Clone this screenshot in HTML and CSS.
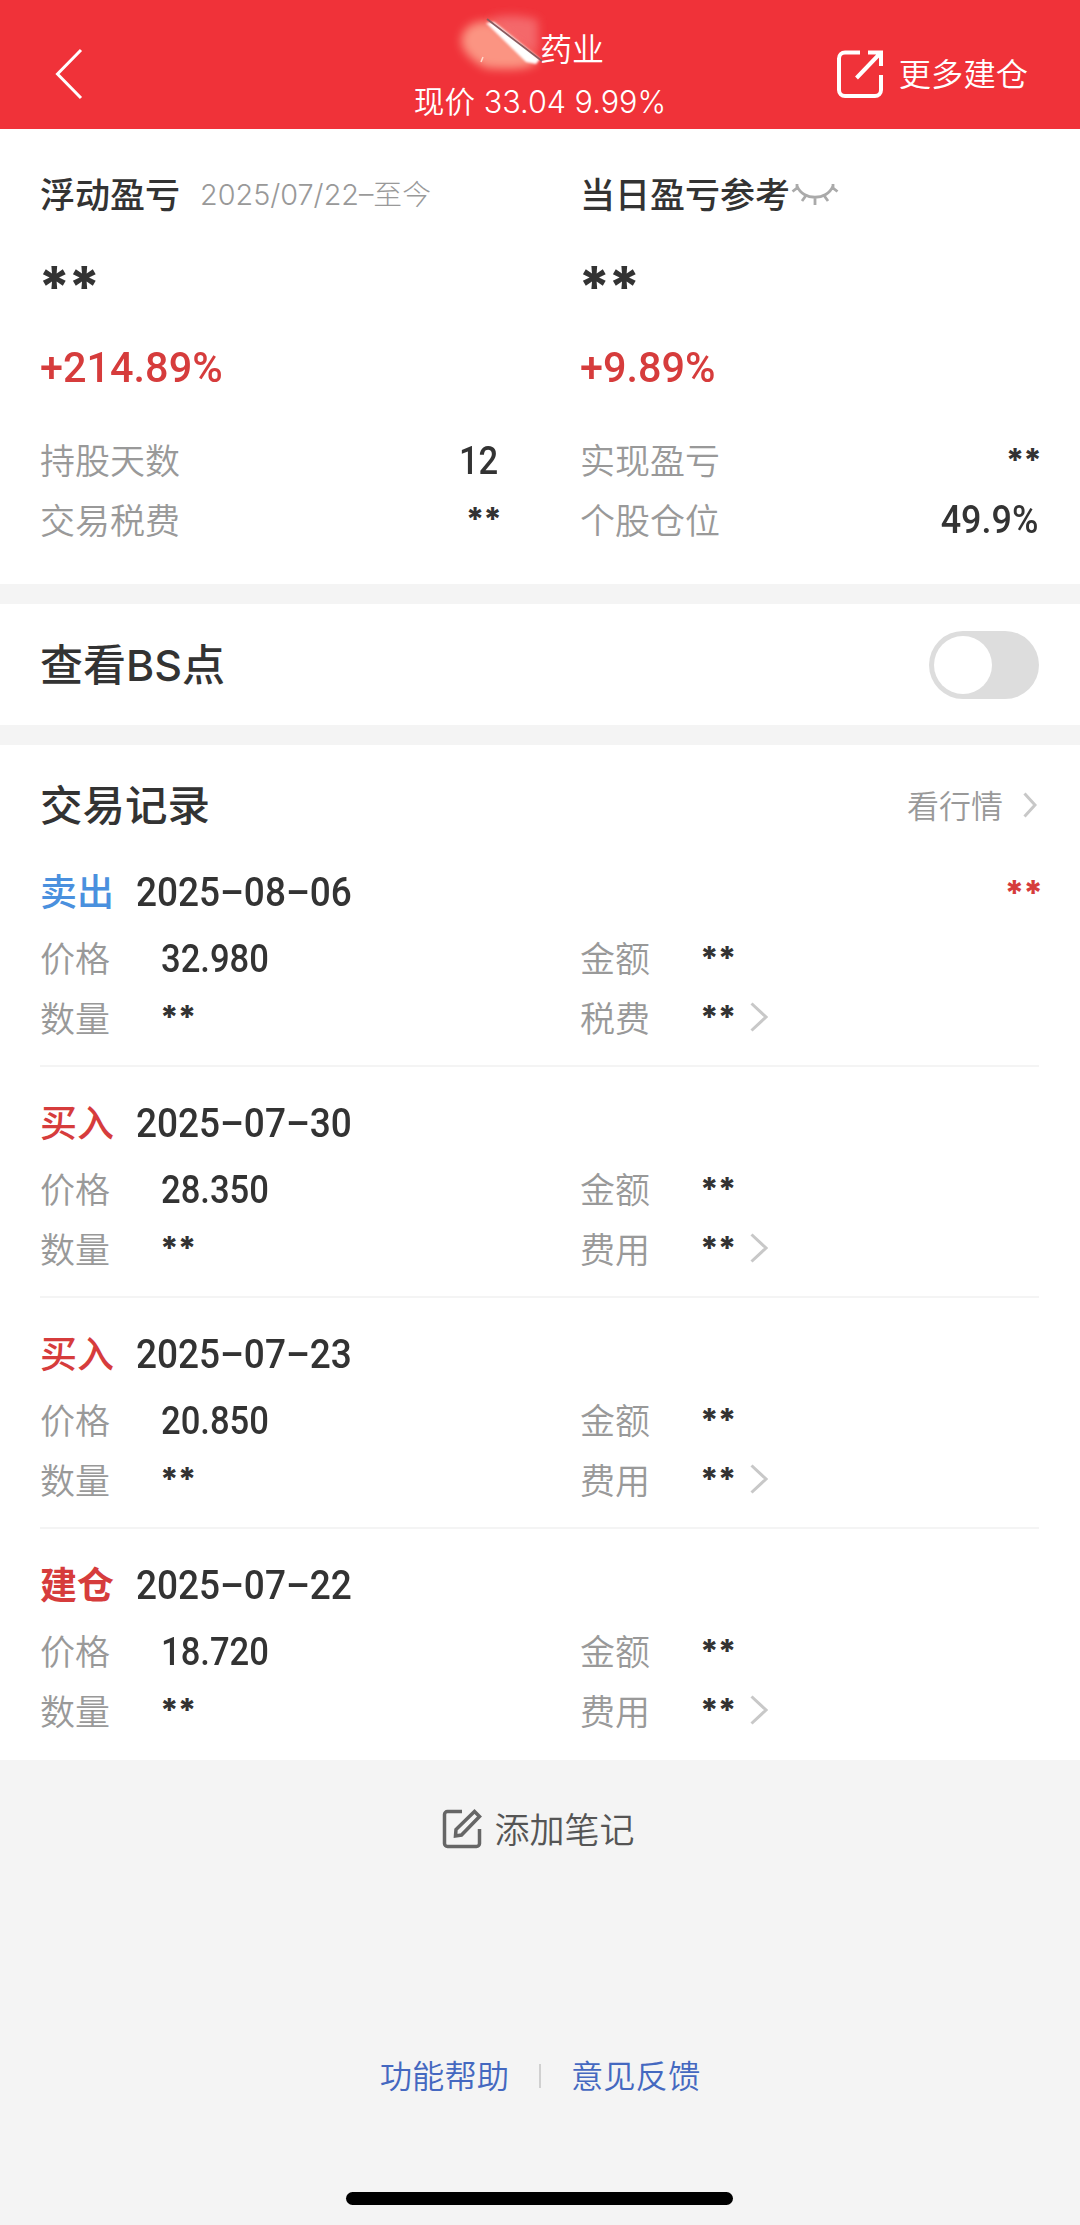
FILE: index.html
```
<!DOCTYPE html>
<html lang="zh-CN">
<head>
<meta charset="utf-8">
<title>药业</title>
<link rel="stylesheet" href="styles.css">
</head>
<body>
<header class="topbar">
  <svg class="back" viewBox="0 0 28 52" width="28" height="52"><path d="M26 2 2.5 26 26 50"/></svg>
  <div class="stock">
    <div class="stock-name">
      <svg class="smudge" viewBox="0 0 100 80" width="100" height="80">
        <defs>
          <filter id="soft" x="-30%" y="-30%" width="160%" height="160%"><feGaussianBlur stdDeviation="5"/></filter>
          <filter id="thin" x="-20%" y="-20%" width="140%" height="140%"><feGaussianBlur stdDeviation="1.2"/></filter>
        </defs>
        <path d="M40 18C60 14 76 16 88 20V54L60 40Z" fill="#f4676b" filter="url(#soft)"/>
        <path d="M12 36C16 24 28 20 42 22L88 60C84 70 60 70 36 68 24 62 8 50 12 36Z" fill="#fb9482" filter="url(#soft)"/>
        <path d="M36 23 44 22 90 59 86 64 76 62Z" fill="#fff" filter="url(#thin)"/>
        <path d="M37 19 92 61" stroke="#8a5a5e" stroke-width="1.8"/>
        <path d="M33 57 31 62" stroke="#ffd9cc" stroke-width="1.5"/>
      </svg>
      <span>药业</span>
    </div>
    <div class="stock-price">现价 33.04 9.99%</div>
  </div>
  <a class="more">
    <svg viewBox="0 0 46 48" width="46" height="48"><path d="M23 2.5H8a6 6 0 0 0-6 6V40a6 6 0 0 0 6 6H38a6 6 0 0 0 6-6V25M31 2.500H44V16M43 3.500 19.500 28"/></svg>
    <span>更多建仓</span>
  </a>
</header>

<section class="summary">
  <div class="col">
    <div class="col-head"><h2>浮动盈亏</h2><span class="range">2025/07/22–至今</span></div>
    <div class="mask big">**</div>
    <div class="pct">+214.89%</div>
    <div class="kv"><span class="label">持股天数</span><span class="num">12</span></div>
    <div class="kv"><span class="label">交易税费</span><span class="mask">**</span></div>
  </div>
  <div class="col">
    <div class="col-head"><h2>当日盈亏参考</h2>
      <svg class="eye" viewBox="0 0 48 24" width="48" height="24"><path d="M6 4C12 19 36 19 42 4M6 2V6L1.500 9.500M42 2V6L46.500 9.500M15 13.500 11 19M24 15.500V23M33 13.500 37 19"/></svg>
    </div>
    <div class="mask big">**</div>
    <div class="pct">+9.89%</div>
    <div class="kv"><span class="label">实现盈亏</span><span class="mask">**</span></div>
    <div class="kv"><span class="label">个股仓位</span><span class="num wide">49.9%</span></div>
  </div>
</section>

<section class="bs">
  <h3>查看BS点</h3>
  <span class="toggle"><span class="knob"></span></span>
</section>

<section class="records">
  <div class="records-head">
    <h3>交易记录</h3>
    <a class="quote"><span>看行情</span><svg viewBox="0 0 14 26" width="14" height="26"><path d="M1.500 1.500 12 13 1.500 24.500"/></svg></a>
  </div>

  <article class="record">
    <div class="record-head"><span class="side sell">卖出</span><span class="date">2025–08–06</span><span class="mask profit">**</span></div>
    <div class="grid">
      <span class="label">价格</span><span class="num">32.980</span><span class="label">金额</span><span class="mask">**</span>
      <span class="label">数量</span><span class="mask">**</span><span class="label">税费</span><span class="fee"><span class="mask">**</span><svg viewBox="0 0 18 30" width="18" height="30"><path d="M1.500 1.500 16 15 1.500 28.500"/></svg></span>
    </div>
  </article>

  <article class="record">
    <div class="record-head"><span class="side buy">买入</span><span class="date">2025–07–30</span></div>
    <div class="grid">
      <span class="label">价格</span><span class="num">28.350</span><span class="label">金额</span><span class="mask">**</span>
      <span class="label">数量</span><span class="mask">**</span><span class="label">费用</span><span class="fee"><span class="mask">**</span><svg viewBox="0 0 18 30" width="18" height="30"><path d="M1.500 1.500 16 15 1.500 28.500"/></svg></span>
    </div>
  </article>

  <article class="record">
    <div class="record-head"><span class="side buy">买入</span><span class="date">2025–07–23</span></div>
    <div class="grid">
      <span class="label">价格</span><span class="num">20.850</span><span class="label">金额</span><span class="mask">**</span>
      <span class="label">数量</span><span class="mask">**</span><span class="label">费用</span><span class="fee"><span class="mask">**</span><svg viewBox="0 0 18 30" width="18" height="30"><path d="M1.500 1.500 16 15 1.500 28.500"/></svg></span>
    </div>
  </article>

  <article class="record">
    <div class="record-head"><span class="side open">建仓</span><span class="date">2025–07–22</span></div>
    <div class="grid">
      <span class="label">价格</span><span class="num">18.720</span><span class="label">金额</span><span class="mask">**</span>
      <span class="label">数量</span><span class="mask">**</span><span class="label">费用</span><span class="fee"><span class="mask">**</span><svg viewBox="0 0 18 30" width="18" height="30"><path d="M1.500 1.500 16 15 1.500 28.500"/></svg></span>
    </div>
  </article>
</section>

<div class="note">
  <svg viewBox="0 0 40 40" width="40" height="40"><path d="M20 2.500H5.500a3 3 0 0 0-3 3V34.500a3 3 0 0 0 3 3H34.500a3 3 0 0 0 3-3V20M13.500 27 14 20.500 32.500 2.500 37.500 7.500 19.500 26Z"/></svg>
  <span>添加笔记</span>
</div>

<footer class="links"><a>功能帮助</a><i></i><a>意见反馈</a></footer>
<div class="home"></div>
</body>
</html>
```

FILE: styles.css
```
* { box-sizing: border-box; }
body {
  margin: 0;
  width: 1080px;
  height: 2225px;
  overflow: hidden;
  display: flex;
  flex-direction: column;
  background: #f4f4f4;
  color: #333;
  font-family: Inter, "Noto Sans CJK SC", sans-serif;
}
svg { display: block; fill: none; flex: none; }
h2, h3 { margin: 0; font-weight: 500; }

.topbar {
  height: 129px;
  flex: none;
  display: grid;
  grid-template-columns: 1fr 260px 1fr;
  align-items: center;
  background: #f03239;
  color: #fff;
}
.back { margin: 18px 0 0 55px; stroke: #fff; stroke-width: 3; }
.stock { align-self: start; padding-top: 30px; }
.stock-name {
  position: relative;
  padding-left: 130px;
  font-size: 32px;
  font-weight: 350;
  line-height: 40px;
}
.smudge { position: absolute; left: 40px; top: -30px; }
.stock-price {
  margin: 12px -10px 0;
  text-align: center;
  font-size: 30.600px;
  font-weight: 350;
  line-height: 40px;
  white-space: nowrap;
}
.more {
  display: flex;
  align-items: center;
  justify-content: flex-end;
  gap: 16px;
  padding: 20px 52px 0 0;
  font-size: 32.300px;
  font-weight: 350;
  line-height: 40px;
}
.more svg { margin-top: -2px; stroke: #fff; stroke-width: 4; }

.summary {
  height: 455px;
  flex: none;
  display: grid;
  grid-template-columns: 540px 540px;
  background: #fff;
}
.col { padding: 41px 42px 0 40px; }
.col-head { display: flex; align-items: center; height: 50px; }
h2 { font-size: 35px; line-height: 50px; }
.range { margin: -6px 0 0 20px; font-size: 28.800px; font-weight: 300; color: #999; }
.eye { margin: -3px 0 0 1px; stroke: #aaa; stroke-width: 2.800; }
.num, .date, .pct {
  font-family: Roboto, "Noto Sans CJK SC", sans-serif;
  font-weight: 500;
  transform-origin: left center;
}
.num { font-size: 38px; transform: scaleX(0.91); }
.kv .num { transform-origin: right center; }
.kv .wide { transform: scaleX(0.945); }
.mask { font-size: 32px; font-weight: 800; letter-spacing: -1px; line-height: 40px; }
.mask.big { font-size: 56px; line-height: 60px; margin: 37px 0 0 -2px; letter-spacing: -2.500px; }
.pct { margin-top: 20px; height: 60px; line-height: 60px; font-size: 43px; transform: scaleX(0.963); color: #d63c3c; }
.kv { display: flex; justify-content: space-between; align-items: center; height: 59.500px; }
.kv .mask { margin-right: -3px; }
.pct + .kv { margin-top: 34px; }
.label { margin-top: -4px; font-size: 35px; font-weight: 350; color: #999; }

.bs {
  height: 121px;
  flex: none;
  margin-top: 20px;
  padding: 0 41px 0 40px;
  display: flex;
  align-items: center;
  justify-content: space-between;
  background: #fff;
}
h3 { font-size: 42.500px; line-height: 60px; }
.bs h3 { font-size: 43px; font-weight: 450; }
.toggle { width: 110px; height: 68px; padding: 5px; border-radius: 34px; background: #ddd; }
.knob { display: block; width: 58px; height: 58px; border-radius: 50%; background: #fff; }

.records {
  height: 1015px;
  flex: none;
  margin-top: 20px;
  padding: 31px 41px 0 40px;
  background: #fff;
}
.records-head { display: flex; align-items: center; justify-content: space-between; height: 60px; }
.quote { display: flex; align-items: center; gap: 20px; padding-right: 2px; font-size: 32px; font-weight: 350; color: #999; }
.quote span { margin-top: -5px; }
.quote svg { margin-top: -2px; }
.quote svg, .fee svg { stroke: #c8c8c8; stroke-width: 3; }
.record { height: 231px; border-bottom: 2px solid #f4f4f4; padding-top: 25px; }
.record:last-child { border-bottom: 0; }
.record-head { display: flex; align-items: center; height: 62px; }
.side { width: 96px; margin-top: -4px; font-size: 37px; font-weight: 500; }
.sell { color: #4a90de; }
.buy, .open, .profit { color: #d63c3c; }
.open { font-weight: 700; }
.date { font-size: 40px; transform: scaleX(0.925); }
.mask.profit { margin: 2px -3px 0 auto; font-size: 34px; }
.grid {
  display: grid;
  grid-template-columns: 121px 419px 121px 1fr;
  grid-auto-rows: 59.500px;
  align-items: center;
  padding-top: 6px;
}
.grid .mask { margin-left: -1px; }
.fee { display: flex; align-items: center; gap: 15px; }
.fee svg { margin-top: -2px; }

.note {
  flex: none;
  display: flex;
  align-items: center;
  justify-content: center;
  gap: 12px;
  height: 60px;
  margin-top: 39px;
  padding-right: 3px;
  font-size: 35px;
  font-weight: 350;
  color: #555;
}
.note span { margin-top: -3px; }
.note svg { stroke: #666; stroke-width: 3.500; }
.links {
  flex: none;
  display: flex;
  align-items: center;
  justify-content: center;
  gap: 30px;
  height: 60px;
  margin-top: 187px;
  font-size: 32.300px;
  font-weight: 350;
  color: #4468c0;
}
.links a { margin-top: -5px; }
.links i { width: 2px; height: 24px; background: #d0d0d0; }
.home { flex: none; align-self: center; width: 387px; height: 13px; margin: 86px 2px 0 0; border-radius: 7px; background: #000; }
```
